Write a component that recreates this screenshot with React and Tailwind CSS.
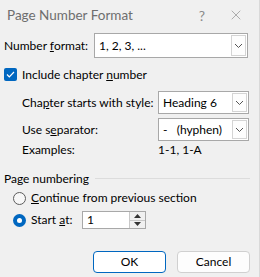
import { X } from 'lucide-react'

const font = { fontFamily: 'Lato, "Liberation Sans", sans-serif' }

function Chevron() {
  return (
    <svg width="9" height="6" viewBox="0 0 9 6" className="text-[#555]">
      <path d="M1 1l3.5 3.5L8 1" fill="none" stroke="currentColor" strokeWidth="1" />
    </svg>
  )
}

function Combo({ value, className }) {
  return (
    <div className={`flex items-stretch bg-white border border-[#a8a8a8] ${className}`}>
      <div className="flex-1 flex items-center pl-[4px] text-[12px] text-black whitespace-pre">{value}</div>
      <div className="w-[15px] my-[1px] mr-[1px] border border-[#d4d4d4] bg-[#fdfdfd] flex items-center justify-center">
        <Chevron />
      </div>
    </div>
  )
}

function Radio({ checked }) {
  return checked ? (
    <div className="w-[13px] h-[13px] shrink-0 rounded-full bg-[#0067c0] flex items-center justify-center">
      <div className="w-[5px] h-[5px] rounded-full bg-white" />
    </div>
  ) : (
    <div className="w-[13px] h-[13px] shrink-0 rounded-full border border-[#5c5c5c] bg-[#f7f7f7]" />
  )
}

export default function App() {
  return (
    <div className="w-[260px] h-[277px] bg-[#f0f0f0] border-r border-[#d9d9d9] overflow-hidden text-[12px] text-black whitespace-nowrap" style={font}>
      {/* Title bar */}
      <div className="h-[30px] flex items-center pl-[7px]">
        <span className="text-[13.5px] text-[#6e6e6e] flex-1">Page Number Format</span>
        <span className="text-[14px] text-[#8a8a8a] w-[20px] text-center">?</span>
        <span className="w-[47px] flex justify-center text-[#8a8a8a]">
          <X className="w-[16px] h-[16px]" strokeWidth={1} />
        </span>
      </div>

      <div className="pl-[4px] pr-[9px]">
        {/* Number format */}
        <div className="flex items-center mt-[3px] h-[25px] pr-[2px]">
          <span className="w-[90px] shrink-0">
            Number <span className="underline">f</span>ormat:
          </span>
          <Combo value="1, 2, 3, ..." className="flex-1 h-[25px]" />
        </div>

        {/* Include chapter number */}
        <div className="flex items-center mt-[10px] h-[13px] gap-[5px]">
          <div className="w-[13px] h-[13px] rounded-[2px] bg-[#0067c0] flex items-center justify-center">
            <svg width="9" height="7" viewBox="0 0 9 7">
              <path d="M1 3.5l2.3 2.3L8 1" fill="none" stroke="white" strokeWidth="1.2" />
            </svg>
          </div>
          <span>
            Include chapter <span className="underline">n</span>umber
          </span>
        </div>

        {/* Chapter options */}
        <div className="pl-[18px] pr-[1px]">
          <div className="flex items-center mt-[10px] h-[23px]">
            <span className="w-[136px] shrink-0">
              Cha<span className="underline">p</span>ter starts with style:
            </span>
            <Combo value="Heading 6" className="flex-1 h-[23px]" />
          </div>
          <div className="flex items-center mt-[4px] h-[23px]">
            <span className="w-[136px] shrink-0">
              Use s<span className="underline">e</span>parator:
            </span>
            <Combo value="-   (hyphen)" className="flex-1 h-[23px]" />
          </div>
          <div className="flex items-center h-[18px]">
            <span className="w-[136px] shrink-0">Examples:</span>
            <span>1-1, 1-A</span>
          </div>
        </div>

        {/* Page numbering */}
        <div className="flex items-center mt-[11px] h-[17px] gap-[6px]">
          <span>Page numbering</span>
          <div className="flex-1 h-px bg-[#dcdcdc]" />
        </div>

        <div className="pl-[9px]">
          <div className="flex items-center mt-[2px] h-[18px] gap-[5px]">
            <Radio />
            <span>
              <span className="underline">C</span>ontinue from previous section
            </span>
          </div>
          <div className="flex items-center mt-[4px] h-[18px]">
            <Radio checked />
            <span className="ml-[5px] w-[51px] shrink-0">
              Start <span className="underline">a</span>t:
            </span>
            <div className="w-[64px] h-[18px] bg-white border border-[#a8a8a8] flex">
              <div className="flex-1 flex items-center pl-[4px]">1</div>
              <div className="w-[16px] flex flex-col border-l border-[#c8c8c8]">
                <div className="flex-1 bg-[#f0f0f0] border-b border-[#c8c8c8] flex items-center justify-center">
                  <svg width="7" height="4" viewBox="0 0 7 4"><path d="M0 4L3.5 0L7 4z" fill="#333" /></svg>
                </div>
                <div className="flex-1 bg-[#f0f0f0] flex items-center justify-center">
                  <svg width="7" height="4" viewBox="0 0 7 4"><path d="M0 0L3.5 4L7 0z" fill="#333" /></svg>
                </div>
              </div>
            </div>
          </div>
        </div>

        {/* Buttons */}
        <div className="flex justify-end gap-[11px] mt-[22px]">
          <button className="w-[73px] h-[22px] bg-white border border-[#0067c0] rounded-[4px] text-[12px]">OK</button>
          <button className="w-[73px] h-[22px] bg-[#fdfdfd] border border-[#d0d0d0] rounded-[4px] text-[12px]">Cancel</button>
        </div>
      </div>
    </div>
  )
}
